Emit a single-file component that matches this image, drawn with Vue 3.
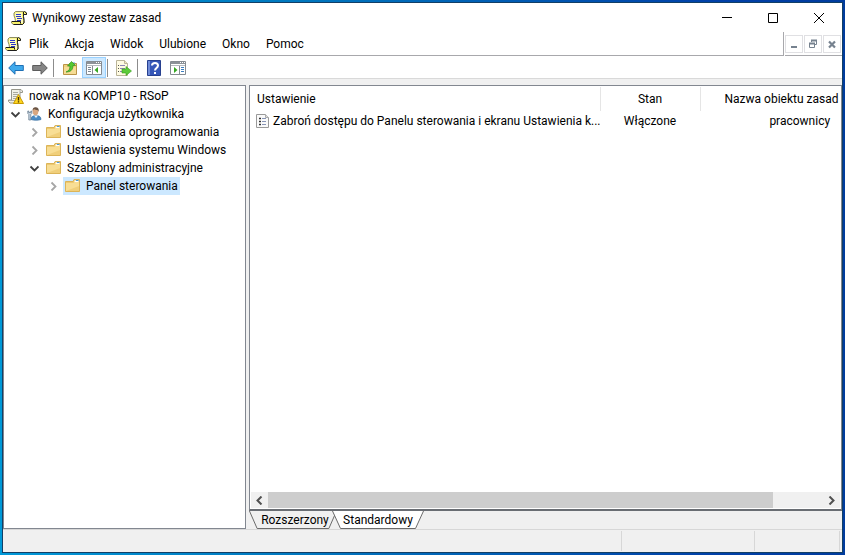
<script setup>
import { ref } from 'vue'

const menu = ['Plik', 'Akcja', 'Widok', 'Ulubione', 'Okno', 'Pomoc']

const tree = ref([
  { id: 1, level: 0, icon: 'rsop', label: 'nowak na KOMP10 - RSoP' },
  { id: 2, level: 1, icon: 'user', label: 'Konfiguracja użytkownika', open: true },
  { id: 3, level: 2, icon: 'folder', label: 'Ustawienia oprogramowania', open: false },
  { id: 4, level: 2, icon: 'folder', label: 'Ustawienia systemu Windows', open: false },
  { id: 5, level: 2, icon: 'folder', label: 'Szablony administracyjne', open: true },
  { id: 6, level: 3, icon: 'folder', label: 'Panel sterowania', open: false }
])
const selected = ref(6)

const policies = ref([
  {
    id: 1,
    name: 'Zabroń dostępu do Panelu sterowania i ekranu Ustawienia k...',
    state: 'Włączone',
    gpo: 'pracownicy'
  }
])

const activeTab = ref('Standardowy')
</script>

<template>
  <div class="desktop">
    <div class="window">
      <!-- Shared icon shapes -->
      <svg class="defs" aria-hidden="true">
        <symbol id="scroll" viewBox="0 0 16 16">
          <path d="M4.500 1.500h9.500l1.500 1.500v1.500h-3v2l.5 4v2.500l-1.500 1.500H2.500L.5 13v-1.500h4l-.5-3-1-3V3z" fill="#f6f06a" stroke="#8c8c62" />
          <path d="M4.500 2.500H11v4l1 4v2.500H9.500v-1.500H5.500l-.5-3-1-3z" fill="#fffcc0" />
          <path d="M13.500 1.500l2 1.500v1.500h-3v2l.5 4v2.500l-1.500 1.500H2.500M12.500 2v2.500M1 11.500h8.500v2" fill="none" stroke="#1c1c1c" />
          <path d="M5 4.500h5M5 6.500h5M6 8.500h5M6 10.500h4" stroke="#2c38c8" />
        </symbol>
        <symbol id="rsop" viewBox="0 0 16 16">
          <path d="M3.500 1.500h9.500l1.500 1.500v1.500h-2.500v9.500l-1 1H2L.5 13.500V12h3z" fill="#f1f1e6" stroke="#96968a" />
          <path d="M12 2v2.500M1 12.500h8" stroke="#aaa" />
          <path d="M5 4.500h5M5 6.500h5M5 8.500h4M5 10.500h3" stroke="#a9a99e" />
          <path d="M10.500 6.500l5 9h-10z" fill="#ffd51f" stroke="#c89a00" stroke-linejoin="round" />
          <path d="M10.500 9v3.500M10.500 13.200v1.300" stroke="#403000" stroke-width="1.400" />
        </symbol>
        <symbol id="user" viewBox="0 0 16 16">
          <path d="M4 13.500c0-2.500 1.500-4 5-4s5 1.500 5 4c-2 1-8 1-10 0z" fill="#4a8cc6" stroke="#2f6699" stroke-width=".6" />
          <path d="M7 9.500l2 2.500 2-2.500z" fill="#e8f2fa" />
          <ellipse cx="8.500" cy="5.500" rx="2.800" ry="3.800" fill="#d9a780" />
          <path d="M5.700 5C5.200 2.500 6.500 1 9 1.200c2.500.2 3.200 2 2.500 4.500L10.500 4C9 4 8 3.800 7 3z" fill="#6b5545" />
          <path d="M.8 5v2.500l1 1V14h2V8.500l1-1V5H3.800v1.500h-2V5z" fill="#c9d6e2" stroke="#5f7488" stroke-width=".7" />
        </symbol>
        <symbol id="folder" viewBox="0 0 16 16">
          <path d="M.5 3.500H8l1-2h5.500v12H.5z" fill="#edca72" stroke="#dcb458" />
          <path d="M9.500 2.500h4v1.500h-4z" fill="#fff" />
          <path d="M11 2.500h2.500" stroke="#4b9bd8" />
          <path d="M1 5h7.500l1-1H14v9H1z" fill="#f8de95" />
          <path d="M1 13h13V8z" fill="#f0cf7b" />
        </symbol>
        <symbol id="policy" viewBox="0 0 14 16">
          <path d="M.5 1.500h9l3 3v10H.5z" fill="#fafafa" stroke="#999" />
          <path d="M9.500 1.500v3h3" fill="#ddd" stroke="#aaa" />
          <path d="M3 5.500h2M3 8.500h2M3 11.500h2" stroke="#333" stroke-width="1.600" />
          <path d="M6 5.500h4M6 8.500h4M6 11.500h4" stroke="#8794b5" />
        </symbol>
        <symbol id="arrow" viewBox="0 0 16 14">
          <path d="M.700 7L7 .8v3.700h8.300v5H7v3.700z" stroke-linejoin="round" />
        </symbol>
        <symbol id="up" viewBox="0 0 16 16">
          <path d="M1.500 4.500h5l1-1h7v11h-13z" fill="#f0d07e" stroke="#bb9446" />
          <path d="M2 7h12v7H2z" fill="#f6dc95" />
          <path d="M11 3h2" stroke="#4b9bd8" />
          <path d="M4 12c3-1 4-3 4-6H5.500l4-4.500 4 4H11C11 10 8.500 12 4 12z" fill="#56c832" stroke="#2f8f1c" stroke-width=".7" />
        </symbol>
        <symbol id="pane" viewBox="0 0 16 14">
          <path d="M.5.500h15v13H.5z" fill="#fff" stroke="#858b91" />
          <path d="M1 2h14" stroke="#8c9298" stroke-width="2" />
          <path d="M10 1.500h1M12 1.500h1M14 1.500h1" stroke="#fff" />
          <path d="M1 4.500h14" stroke="#b5babf" />
        </symbol>
        <symbol id="export" viewBox="0 0 16 16">
          <path d="M.5.500h8l3 3v12H.5z" fill="#fffbe2" stroke="#bab498" />
          <path d="M8.500.500v3h3" fill="#eee6bf" stroke="#bab498" />
          <path d="M2 5.500h1M2 8.500h1M2 11.500h1" stroke="#555" />
          <path d="M4 5.500h5M4 8.500h5M4 11.500h5" stroke="#8c87b5" />
          <path d="M6 9h4V6.500l5.500 4.500-5.500 4.500V13H6z" fill="#5ccb3a" stroke="#36a01c" stroke-width=".6" />
        </symbol>
        <symbol id="help" viewBox="0 0 14 16">
          <path d="M.5.500h13v15H.5z" fill="#3657b8" stroke="#27408f" />
          <path d="M1 1h2v14H1z" fill="#6f8bd8" />
          <path d="M5 5.500C5 2 11 2 11 5.500c0 2.500-3 2.500-3 5" fill="none" stroke="#fff" stroke-width="2" />
          <path d="M7 12h2v2H7z" fill="#fff" />
        </symbol>
      </svg>

      <header class="titlebar">
        <svg class="i16"><use href="#scroll" /></svg>
        <h1>Wynikowy zestaw zasad</h1>
        <div class="caption">
          <button aria-label="Minimalizuj">
            <svg width="10" height="11"><path d="M0 5.500h10" stroke="#000" /></svg>
          </button>
          <button aria-label="Maksymalizuj">
            <svg width="10" height="10"><path d="M.5.500h9v9h-9z" fill="none" stroke="#000" /></svg>
          </button>
          <button aria-label="Zamknij">
            <svg width="10" height="10"><path d="M0 0l10 10M10 0L0 10" stroke="#000" /></svg>
          </button>
        </div>
      </header>

      <div class="menurow">
        <nav class="menubar">
          <svg class="i16"><use href="#scroll" /></svg>
          <button v-for="item in menu" :key="item">{{ item }}</button>
        </nav>
        <div class="child-buttons">
          <button aria-label="Minimalizuj okno">
            <svg width="10" height="10"><path d="M2 8h6" stroke="#76828f" stroke-width="2" /></svg>
          </button>
          <button aria-label="Przywróć okno">
            <svg width="10" height="10">
              <path d="M3.500 3V1.500h5v4H7M1.500 4.500h5v4h-5z" fill="none" stroke="#76828f" />
              <path d="M3 1.500h6M1 4.500h6" stroke="#76828f" stroke-width="2" />
            </svg>
          </button>
          <button aria-label="Zamknij okno">
            <svg width="10" height="10"><path d="M2 2.500l6 6M8 2.500l-6 6" stroke="#76828f" stroke-width="2.200" /></svg>
          </button>
        </div>
      </div>

      <div class="toolbar">
        <button aria-label="Wstecz">
          <svg width="16" height="14" fill="#3fa9ec" stroke="#1e6fb4"><use href="#arrow" /></svg>
        </button>
        <button aria-label="Dalej">
          <svg width="16" height="14" fill="#858585" stroke="#5c5c5c">
            <path d="M15.300 7L9 .8v3.700H.7v5H9v3.700z" stroke-linejoin="round" />
          </svg>
        </button>
        <span class="sep"></span>
        <button aria-label="W górę"><svg class="i16"><use href="#up" /></svg></button>
        <button aria-label="Pokaż drzewo konsoli" class="pressed">
          <svg width="16" height="14">
            <use href="#pane" />
            <path d="M6.500 5v8" stroke="#858b91" />
            <path d="M2 6.500h3M2 8.500h3M2 10.500h3" stroke="#7b8692" />
            <path d="M12 6v6L8.500 9z" fill="#35a822" />
          </svg>
        </button>
        <span class="sep"></span>
        <button aria-label="Eksportuj listę"><svg class="i16"><use href="#export" /></svg></button>
        <span class="sep"></span>
        <button aria-label="Pomoc"><svg width="14" height="16"><use href="#help" /></svg></button>
        <button aria-label="Pokaż okienko akcji">
          <svg width="16" height="14">
            <use href="#pane" />
            <path d="M9.500 5v8" stroke="#858b91" />
            <path d="M11 6.500h3M11 8.500h3M11 10.500h3" stroke="#3c7fc0" />
            <path d="M4 6v6l3.500-3z" fill="#35a822" />
          </svg>
        </button>
      </div>

      <main class="panes">
        <ul class="tree">
          <li v-for="node in tree" :key="node.id" :class="'level' + node.level">
            <button v-if="node.level > 0" class="toggle" :aria-label="node.label" @click="node.open = !node.open">
              <svg v-if="node.open" width="10" height="10"><path d="M1.500 3.500l4 4 4-4" fill="none" stroke="#404040" stroke-width="1.800" /></svg>
              <svg v-else width="10" height="10"><path d="M3.500 1.500l4 4-4 4" fill="none" stroke="#a6a6a6" stroke-width="1.800" /></svg>
            </button>
            <button class="node" :class="{ selected: selected === node.id }" @click="selected = node.id">
              <svg class="i16"><use :href="'#' + node.icon" /></svg>
              <span>{{ node.label }}</span>
            </button>
          </li>
        </ul>

        <section class="details">
          <div class="list">
            <div class="table-wrap">
              <table>
                <thead>
                  <tr>
                    <th class="col-name">Ustawienie</th>
                    <th class="col-state">Stan</th>
                    <th class="col-gpo">Nazwa obiektu zasad</th>
                  </tr>
                </thead>
                <tbody>
                  <tr v-for="p in policies" :key="p.id">
                    <td>
                      <div class="policy">
                        <svg width="14" height="16"><use href="#policy" /></svg>
                        <span>{{ p.name }}</span>
                      </div>
                    </td>
                    <td class="center">{{ p.state }}</td>
                    <td class="center">{{ p.gpo }}</td>
                  </tr>
                </tbody>
              </table>
            </div>
            <div class="scrollbar">
              <button aria-label="Przewiń w lewo">
                <svg width="9" height="9"><path d="M6.500.500l-4 4 4 4" fill="none" stroke="#505050" stroke-width="2" /></svg>
              </button>
              <div class="track"><div class="thumb"></div></div>
              <button aria-label="Przewiń w prawo">
                <svg width="9" height="9"><path d="M2.500.500l4 4-4 4" fill="none" stroke="#505050" stroke-width="2" /></svg>
              </button>
            </div>
          </div>
          <div class="tabs">
            <button
              v-for="tab in ['Rozszerzony', 'Standardowy']"
              :key="tab"
              :class="{ active: activeTab === tab }"
              @click="activeTab = tab"
            >
              <svg viewBox="0 0 92 18" preserveAspectRatio="none">
                <path d="M.5 0l8 17.500h75L91.500 0" stroke="#6b6b6b" vector-effect="non-scaling-stroke" />
              </svg>
              <span>{{ tab }}</span>
            </button>
          </div>
        </section>
      </main>

      <footer class="status">
        <span></span>
        <span class="part-mid"></span>
        <span class="part-end"></span>
      </footer>
    </div>
  </div>
</template>

<style>
body {
  margin: 0;
}
</style>

<style scoped>
* {
  box-sizing: border-box;
}

.desktop {
  min-height: 100vh;
  padding: 2px;
  display: flex;
  background: linear-gradient(90deg, #0099d8, #0078bf 35%, #0040a8 85%, #003c9e);
  font-family: Roboto, "Open Sans", sans-serif;
  font-size: 12px;
  line-height: 18px;
  color: #000;
}

.window {
  flex: 1;
  min-width: 0;
  display: flex;
  flex-direction: column;
  border: 1px solid #123f66;
  background: #f0f0f0;
}

.defs {
  position: absolute;
  width: 0;
  height: 0;
}

svg {
  display: block;
  flex: none;
}

.i16 {
  width: 16px;
  height: 16px;
}

button {
  display: flex;
  align-items: center;
  justify-content: center;
  padding: 0;
  border: none;
  background: none;
  font: inherit;
  color: inherit;
  white-space: nowrap;
}

.titlebar {
  display: flex;
  align-items: center;
  height: 29px;
  padding-left: 8px;
  background: #fff;
}

h1 {
  flex: 1;
  margin: 0 0 0 5px;
  font-size: 12px;
  font-weight: normal;
}

.caption {
  display: flex;
}

.caption button {
  width: 46px;
  height: 28px;
}

.menurow {
  display: flex;
  gap: 1px;
  height: 24px;
  background: #fff;
}

.menubar {
  flex: 1;
  display: flex;
  align-items: center;
  padding-left: 2px;
  border-right: 1px solid #a8a8ac;
  border-bottom: 1px solid #a8a8ac;
}

.menubar button {
  padding: 0 8px;
}

.child-buttons {
  display: flex;
  gap: 1px;
  align-items: center;
  padding-right: 1px;
  border-bottom: 1px solid #a8a8ac;
}

.child-buttons button {
  width: 18px;
  height: 18px;
  border: 1px solid #e0e0e3;
}

.toolbar {
  display: flex;
  align-items: center;
  height: 23px;
  padding: 1px 0 0 1px;
  background: #fff;
  border-bottom: 1px solid #d9d9d9;
}

.toolbar button {
  width: 24px;
  height: 21px;
}

.toolbar .pressed {
  background: #cce8ff;
  border: 1px solid #99d1ff;
}

.sep {
  width: 1px;
  height: 18px;
  margin: 0 4px 0 1px;
  background: #8c8c8c;
}

.panes {
  flex: 1;
  display: flex;
  gap: 3px;
  padding-top: 6px;
}

.tree {
  width: 243px;
  margin: 0;
  padding: 1px 2px;
  list-style: none;
  border: 1px solid #828790;
  background: #fff;
}

.tree li {
  display: flex;
  gap: 3px;
  height: 18px;
}

.level1 {
  padding-left: 2px;
}

.level2 {
  padding-left: 21px;
}

.level3 {
  padding-left: 40px;
}

.toggle {
  width: 14px;
}

.node {
  gap: 5px;
  padding: 0 2px;
}

.selected {
  background: #cce8ff;
}

.details {
  flex: 1;
  min-width: 0;
  display: flex;
  flex-direction: column;
}

.list {
  flex: 1;
  display: flex;
  flex-direction: column;
  justify-content: space-between;
  border: 1px solid #828790;
  border-bottom: 2px solid #696d73;
  background: #fff;
}

.table-wrap {
  overflow: hidden;
  padding-top: 1px;
}

table {
  width: 650px;
  table-layout: fixed;
  border-collapse: collapse;
}

th {
  height: 24px;
  padding: 0;
  font-weight: normal;
  border-right: 1px solid #e5e5e5;
}

td {
  height: 20px;
  padding: 0;
}

.col-name {
  width: 350px;
  padding-left: 7px;
  text-align: left;
}

.col-state {
  width: 100px;
}

.col-gpo {
  padding-left: 24px;
  text-align: left;
}

.center {
  text-align: center;
}

.policy {
  display: flex;
  align-items: center;
  gap: 3px;
  padding-left: 6px;
  white-space: nowrap;
}

.scrollbar {
  display: flex;
  height: 16px;
  margin: 0 1px 1px;
  background: #f0f0f0;
}

.scrollbar button {
  width: 17px;
}

.track {
  flex: 1;
}

.thumb {
  width: 91%;
  height: 100%;
  background: #cdcdcd;
}

.tabs {
  display: flex;
  height: 18px;
}

.tabs button {
  position: relative;
  width: 88px;
  padding-left: 4px;
}

.tabs .active {
  width: 92px;
  margin-left: -5px;
  padding: 0;
}

.tabs svg {
  position: absolute;
  top: 0;
  left: 0;
  width: 100%;
  height: 100%;
  fill: #f0f0f0;
}

.tabs .active svg {
  fill: #fff;
}

.tabs span {
  position: relative;
}

.status {
  display: flex;
  height: 23px;
  padding: 1px 2px 1px 0;
  border-top: 1px solid #d7d7d7;
}

.status span {
  flex: 1;
  border-right: 1px solid #d7d7d7;
}

.status .part-mid {
  flex: none;
  width: 133px;
}

.status .part-end {
  flex: none;
  width: 85px;
}
</style>
